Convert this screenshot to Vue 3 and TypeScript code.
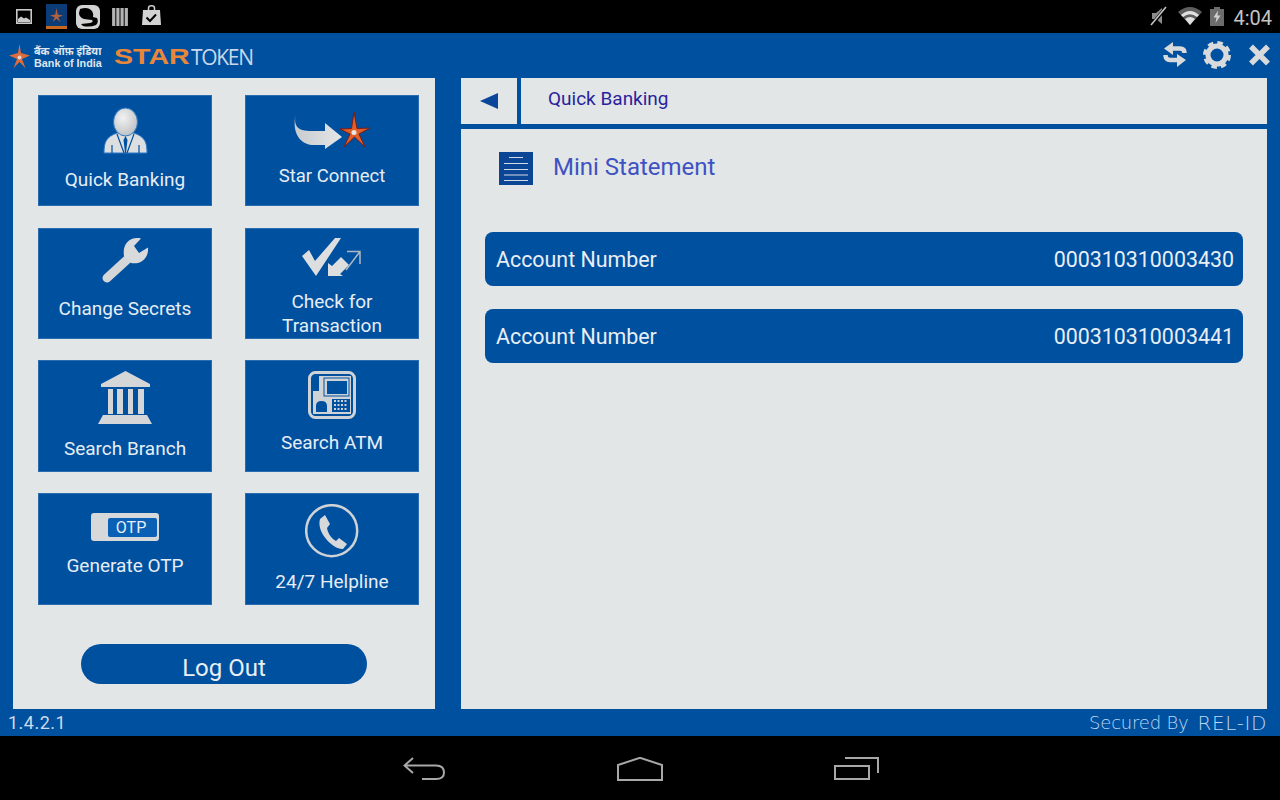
<script setup lang="ts">
interface Account {
  label: string
  number: string
}

const accounts: Account[] = [
  { label: 'Account Number', number: '000310310003430' },
  { label: 'Account Number', number: '000310310003441' },
]
</script>

<template>
  <div class="screen">
    <div class="status-bar">
      <div class="status-left">
        <svg class="st-image" width="16" height="15" viewBox="16 9 16 15">
          <rect x="16.8" y="9.8" width="14.4" height="13.4" fill="#000" stroke="#c9c9c9" stroke-width="1.6" />
          <path d="M18 22 L18 19 L21 16.5 L24 18.5 L26 17.5 L30 20 L30 22 Z" fill="#c9c9c9" />
        </svg>
        <svg class="st-star" width="21" height="25" viewBox="46 4 21 25">
          <rect x="46" y="4" width="21" height="25" fill="#0c3c78" />
          <rect x="46" y="26" width="21" height="3" fill="#c8681e" />
          <path d="M56.500 8 L57.700 14.500 L63 15.500 L58.200 17.300 L60.500 22 L56.500 18.800 L52.500 22 L54.800 17.300 L50 15.500 L55.300 14.500 Z" fill="#b4623e" />
        </svg>
        <svg class="st-chat" width="24" height="24" viewBox="76 5 24 24">
          <rect x="76" y="5" width="24" height="24" rx="6" fill="#d2d2d2" />
          <path d="M80 9 Q88 6 92 11 Q94 14 93 17 L97 18 Q99 22 96 25 Q90 27.500 83 26 L81 24 L90 23 Q94 22 92 20 L84 19 Q79 17 79 13 Z" fill="#000" />
        </svg>
        <svg class="st-bars" width="16" height="18" viewBox="112 8 16 18">
          <path d="M113.700 8 V26 M117.900 8 V26 M122.100 8 V26 M126.300 8 V26" stroke="#b4b4b4" stroke-width="3.200" />
        </svg>
        <svg class="st-bag" width="19" height="21" viewBox="142 5 19 21">
          <path d="M148.500 11 V8 Q148.500 5.800 151.500 5.800 Q154.500 5.800 154.500 8 V11" fill="none" stroke="#d2d2d2" stroke-width="1.500" />
          <path d="M143 10 H160 L161 25 H142 Z" fill="#d2d2d2" />
          <path d="M146.500 17.500 L150 21 L156 14.500" fill="none" stroke="#000" stroke-width="2" />
        </svg>
      </div>
      <div class="status-right">
        <svg class="st-mute" width="18" height="20" viewBox="1149 6 18 20">
          <path d="M1151 13 H1155 L1161 8 V24 L1155 19 H1151 Z" fill="#8c8c8c" />
          <path d="M1165.500 7 L1150.500 25" stroke="#000" stroke-width="3.500" />
          <path d="M1165 7 L1150 25" stroke="#c4c4c4" stroke-width="1.600" />
        </svg>
        <svg class="st-wifi" width="24" height="18" viewBox="1177 7 24 18">
          <path d="M1177 12 Q1189 2 1201 12 L1189 25 Z" fill="#5e5e5e" />
          <path d="M1180 15 Q1189 7 1198 15 L1196 17 Q1189 11.500 1182 17 Z" fill="#e0e0e0" />
          <path d="M1184 19 Q1189 15 1194 19 L1189 25 Z" fill="#e0e0e0" />
        </svg>
        <svg class="st-batt" width="14" height="19" viewBox="1209 7 14 19">
          <path d="M1213 7 H1219 V9 H1223 V26 H1209 V9 H1213 Z" fill="#6c6c6c" />
          <path d="M1217 10.500 L1212.500 17.500 H1215.500 L1214.500 23 L1219.500 15.500 H1216.500 Z" fill="#d0d0d0" />
        </svg>
        <span class="clock">4:04</span>
      </div>
    </div>

    <div class="app">
      <header class="app-header">
        <div class="brand">
          <svg class="brand-star" width="21" height="25" viewBox="9 44 21 25">
            <path d="M19.500 44 L21 53 L30 55.500 L22 59 L25.500 68 L19.500 62 L13.500 68 L17 59 L9 55.500 L18 53 Z" fill="#dc6c3c" />
            <circle cx="19.500" cy="57.500" r="2" fill="#e2d4cc" />
          </svg>
          <div class="bank-name">
            <span class="bank-hi">बैंक ऑफ़ इंडिया</span>
            <span class="bank-en">Bank of India</span>
          </div>
          <span class="star-word">STAR</span>
          <span class="token-word">TOKEN</span>
        </div>
        <div class="header-actions">
          <svg width="24" height="26" viewBox="1163 41 24 26">
            <path d="M1164 48.500 L1173 42 V55 Z" fill="#d8dadc" />
            <path d="M1172 48.500 H1180 Q1184.500 48.500 1184.500 53" fill="none" stroke="#d8dadc" stroke-width="4.500" />
            <path d="M1186 60 L1177 54 V67 Z" fill="#d8dadc" />
            <path d="M1178 60 H1170 Q1165.500 60 1165.500 55" fill="none" stroke="#d8dadc" stroke-width="4.500" />
          </svg>
          <svg class="gear" width="28" height="28" viewBox="0 0 28 28">
            <circle cx="14" cy="14" r="9" fill="none" stroke="#d8dadc" stroke-width="5" />
            <circle cx="14" cy="14" r="12" fill="none" stroke="#d8dadc" stroke-width="4" stroke-dasharray="5.420 4" />
          </svg>
          <svg class="close" width="23" height="22" viewBox="0 0 23 22">
            <path d="M3 2.500 L20 19.500 M20 2.500 L3 19.500" stroke="#d8dadc" stroke-width="5.500" />
          </svg>
        </div>
      </header>

      <main class="app-main">
        <aside class="side-panel">
          <div class="tile-grid">
            <div class="tile tile-quick">
              <svg width="46" height="47" viewBox="101 107 46 47">
                <defs>
                  <radialGradient id="headFill" cx="0.4" cy="0.35" r="0.8">
                    <stop offset="0" stop-color="#f2f2f2" />
                    <stop offset="1" stop-color="#b4b8bc" />
                  </radialGradient>
                </defs>
                <path d="M103 153 C103 142 105 137 116 133 L133 133 C144 137 146 142 146 153 Z" fill="#dcdee0" stroke="#2d78c8" stroke-width="1" />
                <ellipse cx="124.500" cy="122" rx="12" ry="14" fill="url(#headFill)" stroke="#2d78c8" stroke-width="1" />
                <path d="M116 134 L123 153 M133 134 L126 153 M111 153 V145 M138 153 V145" stroke="#0050a0" stroke-width="1.200" />
                <path d="M124.500 136 L122.500 140 L124 153 L125 153 L126.500 140 Z" fill="#0050a0" />
              </svg>
              <span class="tile-label">Quick Banking</span>
            </div>

            <div class="tile tile-star">
              <svg width="77" height="37" viewBox="292 112 77 37">
                <defs>
                  <linearGradient id="arrowFill" x1="0" y1="0" x2="1" y2="0">
                    <stop offset="0" stop-color="#c8ccd0" />
                    <stop offset="1" stop-color="#e4e5e6" />
                  </linearGradient>
                </defs>
                <path d="M294 113 C291 125 295 131 308 131 L323 131 L323 123 L340 137 L323 149 L323 145 L312 145 C298 145 289 132 294 113 Z" fill="url(#arrowFill)" />
                <path d="M352 112 L355 128.500 L368 128 L357 134 L363 147 L352.500 137 L342 147 L348 134 L338 129 L349.500 128.500 Z" fill="#e0602a" stroke="#7a1c18" stroke-width="1" />
                <circle cx="352" cy="132.500" r="2.500" fill="#e6e6e6" />
              </svg>
              <span class="tile-label">Star Connect</span>
            </div>

            <div class="tile tile-secrets">
              <svg width="48" height="46" viewBox="101 238 48 46">
                <path d="M107 278 L130 257" stroke="#d4d6d8" stroke-width="9" stroke-linecap="round" />
                <path d="M124 256 C122 244 130 236 141 238.500 L134 246 L139 253 L148 247.500 C149 258 141 265 131 263 Z" fill="#d8dadc" />
              </svg>
              <span class="tile-label">Change Secrets</span>
            </div>

            <div class="tile tile-check">
              <svg width="60" height="39" viewBox="302 238 60 39">
                <path d="M302 256 L309 250 L315 261 L335 238 L341 238 L316 276 Z" fill="#dcdee0" />
                <path d="M328 276 L328 263 L332 266 L341 257 L349 265 L340 274 L343 276 Z" fill="#dcdee0" />
                <path d="M347 251.500 H360 V264 M360 251.500 L346 270" fill="none" stroke="#aeb8c4" stroke-width="1.500" />
              </svg>
              <span class="tile-label">Check for<br />Transaction</span>
            </div>

            <div class="tile tile-branch">
              <svg width="54" height="53" viewBox="98 371 54 53">
                <path d="M125.500 371 L150 384 V387 H101 V384 Z" fill="#d4d6d8" />
                <path d="M108 389 H113 V414 H108 Z M117 389 H123 V414 H117 Z M128 389 H133 V414 H128 Z M138 389 H144 V414 H138 Z" fill="#d4d6d8" />
                <path d="M103 415 H147 L152 424 H98 Z" fill="#d4d6d8" />
              </svg>
              <span class="tile-label">Search Branch</span>
            </div>

            <div class="tile tile-atm">
              <svg width="48" height="48" viewBox="307 371 48 48">
                <rect x="308.500" y="372.500" width="45" height="45" rx="6" fill="#0050a0" stroke="#d0d3d6" stroke-width="3" />
                <path d="M312 376 H350 V414 H312 V391 H318 V376 Z" fill="#d0d3d6" />
                <rect x="323" y="378" width="25" height="18" fill="#d0d3d6" stroke="#0050a0" stroke-width="1" />
                <rect x="326" y="381" width="20" height="13" fill="#0050a0" />
                <path d="M315 412 V406 Q315 401 320.500 401 Q326 401 326 406 V412 Z" fill="#0050a0" />
                <rect x="331" y="399" width="18" height="13" fill="#0050a0" />
                <path d="M333 401 H347 M333 405 H347 M333 409 H347" stroke="#d0d3d6" stroke-width="2" stroke-dasharray="2 1.500" />
              </svg>
              <span class="tile-label">Search ATM</span>
            </div>

            <div class="tile tile-otp">
              <svg width="68" height="28" viewBox="90 513 68 28">
                <rect x="90" y="513" width="68" height="28" rx="3" fill="#d6d8da" />
                <rect x="107" y="518" width="49" height="19" rx="2" fill="#0a60b4" />
                <text class="otp-text" x="130" y="533">OTP</text>
              </svg>
              <span class="tile-label">Generate OTP</span>
            </div>

            <div class="tile tile-help">
              <svg width="54" height="54" viewBox="305 504 54 54">
                <circle cx="331.700" cy="530.700" r="25.500" fill="none" stroke="#cfd3d6" stroke-width="2.500" />
                <path d="M320 519 L325 515 L330 524 L327 528 C328 534 332 539 336 541 L339 538 L347 544 L343 549 C334 550 316 533 320 519 Z" fill="#d6d8da" />
              </svg>
              <span class="tile-label">24/7 Helpline</span>
            </div>
          </div>
          <button class="logout" type="button">Log Out</button>
        </aside>

        <section class="content-panel">
          <div class="crumb">
            <div class="crumb-back">
              <svg width="18" height="16" viewBox="0 0 18 16">
                <path d="M0 8 L18 0 V16 Z" fill="#0a479a" />
              </svg>
            </div>
            <span class="crumb-title">Quick Banking</span>
          </div>
          <div class="section-title">
            <svg width="34" height="33" viewBox="0 0 34 33">
              <rect width="34" height="33" fill="#0a4596" />
              <path d="M10 5.500 H24 M5 11.500 H29 M5 17.500 H29 M5 23 H29 M5 28.500 H29" stroke="#d5dce6" stroke-width="1" />
            </svg>
            <h2>Mini Statement</h2>
          </div>
          <div class="account-list">
            <div v-for="account in accounts" :key="account.number" class="account-row">
              <span>{{ account.label }}</span>
              <span>{{ account.number }}</span>
            </div>
          </div>
        </section>
      </main>

      <footer class="app-footer">
        <span class="version">1.4.2.1</span>
        <div class="secured">
          <span class="secured-by">Secured By</span>
          <span class="rel-id">REL-ID</span>
        </div>
      </footer>
    </div>

    <nav class="nav-bar">
      <div class="nav-item">
        <svg width="42" height="24" viewBox="403 758 42 24">
          <path d="M413 759 L404.500 766.500 L413 774 M405 766.500 H436 Q444 766.500 444 773.500 Q444 780 436 780 H422" fill="none" stroke="#a8a8a8" stroke-width="2" />
        </svg>
      </div>
      <div class="nav-item">
        <svg width="46" height="25" viewBox="617 757 46 25">
          <path d="M618 780 V765 L640 757.800 L662 765 V780 Z" fill="none" stroke="#a8a8a8" stroke-width="2" />
        </svg>
      </div>
      <div class="nav-item">
        <svg width="45" height="24" viewBox="835 758 45 24">
          <rect x="836" y="767" width="34" height="13" fill="none" stroke="#a8a8a8" stroke-width="2" />
          <path d="M846 759 H879 V774" fill="none" stroke="#a8a8a8" stroke-width="2" />
        </svg>
      </div>
    </nav>
  </div>
</template>

<style>
html,
body {
  margin: 0;
  background: #000;
}
</style>

<style scoped>
.screen {
  width: 1280px;
  height: 800px;
  display: flex;
  flex-direction: column;
  overflow: hidden;
  background: #000;
  font-family: Roboto, "Liberation Sans", sans-serif;
}

.status-bar {
  height: 33px;
  display: flex;
  justify-content: space-between;
  align-items: flex-start;
  flex-shrink: 0;
}
.status-left,
.status-right {
  display: flex;
  align-items: flex-start;
}
.st-image {
  margin: 9px 0 0 16px;
}
.st-star {
  margin: 4px 0 0 14px;
}
.st-chat {
  margin: 5px 0 0 9px;
}
.st-bars {
  margin: 8px 0 0 12px;
}
.st-bag {
  margin: 5px 0 0 14px;
}
.st-mute {
  margin-top: 6px;
}
.st-wifi {
  margin: 7px 0 0 10px;
}
.st-batt {
  margin: 7px 0 0 8px;
}
.clock {
  margin: 6px 8px 0 9px;
  font-size: 20px;
  line-height: 24px;
  color: #c4c4c4;
}

.app {
  height: 703px;
  display: flex;
  flex-direction: column;
  flex-shrink: 0;
  background: #0050a0;
}
.app-header {
  height: 45px;
  display: flex;
  justify-content: space-between;
  flex-shrink: 0;
}
.brand {
  display: flex;
  align-items: flex-start;
  padding-left: 9px;
}
.brand-star {
  margin-top: 11px;
}
.bank-name {
  display: flex;
  flex-direction: column;
  margin: 13px 0 0 4px;
  width: 76px;
  color: #dfe6ee;
  font-family: "Liberation Sans", "Noto Sans", sans-serif;
  font-weight: 700;
}
.bank-hi {
  font-size: 10.700px;
  line-height: 11px;
}
.bank-en {
  font-size: 10.800px;
  line-height: 13px;
}
.star-word {
  margin: 10px 0 0 4px;
  width: 77px;
  font-family: "Liberation Sans", sans-serif;
  font-weight: 700;
  font-size: 22.500px;
  line-height: 28px;
  color: #e8873a;
  transform: scaleX(1.27);
  transform-origin: left center;
}
.token-word {
  margin: 10px 0 0 0;
  font-family: "Open Sans", sans-serif;
  font-size: 21px;
  line-height: 28px;
  letter-spacing: -1.300px;
  color: #c8d8ea;
}
.header-actions {
  display: flex;
  align-items: flex-start;
  padding-right: 9px;
}
.header-actions svg:first-child {
  margin-top: 8px;
}
.gear {
  margin: 8px 0 0 16px;
}
.close {
  margin: 11px 0 0 17px;
}

.app-main {
  height: 631px;
  display: flex;
  gap: 26px;
  padding: 0 13px;
  flex-shrink: 0;
}
.side-panel {
  width: 422px;
  box-sizing: border-box;
  padding: 17px 0 0 25px;
  background: #e2e6e7;
}
.tile-grid {
  display: grid;
  grid-template-columns: 174px 174px;
  grid-template-rows: 133px 132px 133px 112px;
  column-gap: 33px;
}
.tile {
  height: 111px;
  display: flex;
  flex-direction: column;
  align-items: center;
  box-sizing: border-box;
  background: #0050a0;
  box-shadow: inset 0 0 0 1px #2a6cb0;
}
.tile:nth-child(n + 5) {
  height: 112px;
}
.tile-label {
  font-size: 19px;
  line-height: 24px;
  text-align: center;
  color: #e6edf4;
}
.tile-quick {
  padding-top: 12px;
}
.tile-quick .tile-label {
  margin-top: 14px;
}
.tile-star {
  padding-top: 17px;
}
.tile-star .tile-label {
  margin-top: 15px;
  font-size: 18.500px;
}
.tile-secrets {
  padding-top: 10px;
}
.tile-secrets .tile-label {
  margin-top: 13px;
}
.tile-check {
  padding-top: 10px;
}
.tile-check .tile-label {
  margin-top: 13px;
}
.tile-branch {
  padding-top: 11px;
}
.tile-branch .tile-label {
  margin-top: 13px;
}
.tile-atm {
  padding-top: 11px;
}
.tile-atm .tile-label {
  margin-top: 12px;
}
.tile-otp {
  padding-top: 20px;
}
.tile-otp .tile-label {
  margin-top: 13px;
}
.tile-help {
  padding-top: 11px;
}
.tile-help .tile-label {
  margin-top: 12px;
}
.otp-text {
  font-size: 16px;
  fill: #e6eef6;
  text-anchor: middle;
}
.logout {
  display: block;
  width: 286px;
  height: 40px;
  margin: 39px 0 0 43px;
  padding: 8px 0 0;
  border: 0;
  border-radius: 20px;
  background: #0050a0;
  font-family: inherit;
  font-size: 24px;
  line-height: 33px;
  color: #e8eef4;
}

.content-panel {
  width: 806px;
  display: flex;
  flex-direction: column;
  background: #e2e6e7;
}
.crumb {
  height: 46px;
  display: flex;
  align-items: center;
  border-bottom: 5px solid #0050a0;
  flex-shrink: 0;
}
.crumb-back {
  width: 60px;
  height: 46px;
  display: flex;
  align-items: center;
  box-sizing: border-box;
  padding-left: 19px;
  border-right: 4px solid #0050a0;
}
.crumb-title {
  margin: 0 0 6px 27px;
  font-size: 19px;
  color: #2a1f9c;
}
.section-title {
  display: flex;
  align-items: center;
  gap: 20px;
  height: 33px;
  margin: 23px 0 0 38px;
}
.section-title h2 {
  margin: 0 0 4px;
  font-size: 24px;
  font-weight: 400;
  color: #3f52c2;
}
.account-list {
  display: flex;
  flex-direction: column;
  gap: 23px;
  width: 758px;
  margin: 47px 0 0 24px;
}
.account-row {
  height: 54px;
  display: flex;
  align-items: center;
  justify-content: space-between;
  box-sizing: border-box;
  padding: 1px 9px 0 11px;
  border-radius: 8px;
  background: #0050a0;
  font-size: 21.400px;
  color: #e8eef4;
}

.app-footer {
  flex: 1;
  display: flex;
  justify-content: space-between;
  align-items: center;
  padding: 0 13px 0 8px;
}
.version {
  font-size: 18px;
  letter-spacing: 0.5px;
  color: #cfdbe8;
}
.secured {
  display: flex;
  align-items: center;
  gap: 9px;
  color: #bcd8f5;
}
.secured-by {
  font-family: "DejaVu Sans", sans-serif;
  font-weight: 200;
  font-size: 18px;
  letter-spacing: -0.2px;
}
.rel-id {
  font-family: "DejaVu Sans", sans-serif;
  font-weight: 200;
  font-size: 20px;
  letter-spacing: 0.6px;
}

.nav-bar {
  flex: 1;
  display: grid;
  grid-template-columns: 216px 216px 216px;
  justify-content: center;
}
.nav-item {
  display: flex;
  justify-content: center;
  padding-top: 21px;
}
</style>
